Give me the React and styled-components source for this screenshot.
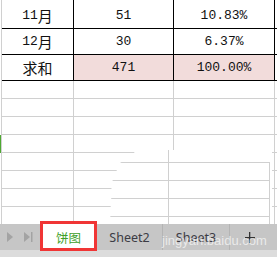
import styled, { createGlobalStyle } from "styled-components";

const GlobalStyle = createGlobalStyle`
  html, body { margin: 0; padding: 0; background: #fff; }
  #root { width: 277px; height: 257px; }
`;

const rows = [
  { label: "11", han: "月", value: "51", rate: "10.83%", height: 29 },
  { label: "12", han: "月", value: "30", rate: "6.37%", height: 26 },
  { label: "", han: "求和", value: "471", rate: "100.00%", height: 26, total: true },
];

const emptyRows = 8;
const widths = [72, 100, 101];

const Page = styled.div`
  position: relative;
  width: 277px;
  height: 257px;
  overflow: hidden;
  background: #fff;
`;

const Sheet = styled.div`
  height: 224px;
  overflow: hidden;
`;

const Row = styled.div`
  display: flex;
  height: ${(p) => p.$h}px;
`;

const Gutter = styled.div`
  flex: none;
  width: 2px;
  box-sizing: border-box;
  border-right: 1px solid #d0d0d0;
  background: ${(p) => (p.$active ? "#4ea832" : "transparent")};
`;

const Cell = styled.div`
  flex: none;
  width: ${(p) => p.$w}px;
  box-sizing: border-box;
  border-right: 1px solid ${(p) => (p.$table ? "#000" : "#d0d0d0")};
  border-bottom: 1px solid ${(p) => (p.$table ? "#000" : "#d0d0d0")};
  background: ${(p) => (p.$pink ? "#f2dcdb" : "#fff")};
  display: flex;
  align-items: flex-end;
  justify-content: center;
  padding-bottom: 4px;
  font-family: "Liberation Mono", "Noto Sans CJK SC", monospace;
  font-size: 13px;
  line-height: 16px;
  color: #111;
  white-space: nowrap;
`;

const Rest = styled.div`
  flex: 1;
  box-sizing: border-box;
  border-bottom: 1px solid ${(p) => (p.$table ? "#000" : "#d0d0d0")};
`;

const Han = styled.span`
  font-family: "Noto Sans CJK SC", sans-serif;
  font-size: 15px;
  line-height: 16px;
`;

const TabBar = styled.div`
  height: 26px;
  background: #c6c6c6;
  display: flex;
  align-items: center;
  font-family: "Noto Sans", "Noto Sans CJK SC", sans-serif;
  font-size: 12.5px;
  color: #3c3c44;
`;

const Scroll = styled.div`
  height: 7px;
  background: #dcdcdc;
`;

const Nav = styled.div`
  display: flex;
  align-items: center;
  gap: 8px;
  width: 40px;
  padding-left: 7px;
  box-sizing: border-box;
`;

const ActiveTab = styled.div`
  align-self: flex-start;
  margin-top: -3px;
  width: 57px;
  height: 30px;
  box-sizing: border-box;
  border: 3px solid #f03535;
  background: #fff;
  display: flex;
  align-items: center;
  justify-content: center;
  padding-top: 2px;
  color: #3e9f2a;
  font-family: "Noto Sans CJK SC", sans-serif;
  font-size: 12.5px;
`;

const Tab = styled.div`
  width: ${(p) => p.$w}px;
  height: 100%;
  box-sizing: border-box;
  display: flex;
  align-items: center;
  justify-content: center;
  padding-top: 1px;
  border-right: 1px solid #b4b4b4;
`;

const Plus = styled.div`
  width: 40px;
  display: flex;
  justify-content: center;
  padding-top: 1px;
`;

const Watermark = styled.div`
  position: absolute;
  left: 110px;
  top: 150px;
  width: 162px;
  height: 74px;
  background:
    linear-gradient(#d0d0d0, #d0d0d0) 58px 0 / 1px 100% no-repeat,
    linear-gradient(#d0d0d0, #d0d0d0) 159px 12px / 1px 100% no-repeat,
    repeating-linear-gradient(to bottom, #fff 0 12px, #d0d0d0 12px 13px, #fff 13px 18px) 0 0 / 160px 100% no-repeat,
    #fff;
  clip-path: polygon(28px 0, 162px 0, 162px 74px, 0 74px, 2px 32px, 10px 13px);
`;

const Mark = styled.div`
  position: absolute;
  left: 162px;
  top: 233px;
  font-family: "Liberation Sans", sans-serif;
  font-size: 13px;
  color: rgba(255, 255, 255, 0.65);
  pointer-events: none;
`;

const Arrow = ({ bar }) => (
  <svg width="9" height="10" viewBox="0 0 9 10">
    <polygon points="0,0 6,5 0,10" fill="#a3a3a3" />
    {bar && <rect x="7" y="0" width="1.5" height="10" fill="#a3a3a3" />}
  </svg>
);

export default function App() {
  return (
    <Page>
      <GlobalStyle />
      <Sheet>
        {rows.map((r, i) => (
          <Row key={`r${i}`} $h={r.height}>
            <Gutter />
            <Cell $w={widths[0]} $table>
              {r.label}
              <Han>{r.han}</Han>
            </Cell>
            <Cell $w={widths[1]} $table $pink={r.total}>
              {r.value}
            </Cell>
            <Cell $w={widths[2]} $table $pink={r.total}>
              {r.rate}
            </Cell>
            <Rest $table />
          </Row>
        ))}
        {Array.from({ length: emptyRows }).map((_, i) => (
          <Row key={`e${i}`} $h={18}>
            <Gutter $active={i === 3} />
            {widths.map((w) => (
              <Cell key={w} $w={w} />
            ))}
            <Rest />
          </Row>
        ))}
      </Sheet>
      <TabBar>
        <Nav>
          <Arrow />
          <Arrow bar />
        </Nav>
        <ActiveTab>饼图</ActiveTab>
        <Tab $w={66}>Sheet2</Tab>
        <Tab $w={67}>Sheet3</Tab>
        <Plus>
          <svg width="10" height="11" viewBox="0 0 10 11">
            <rect x="4" y="0" width="1.3" height="11" fill="#333" />
            <rect x="0" y="5" width="10" height="1.3" fill="#333" />
          </svg>
        </Plus>
      </TabBar>
      <Scroll />
      <Watermark />
      <Mark>jingyan.baidu.com</Mark>
    </Page>
  );
}
